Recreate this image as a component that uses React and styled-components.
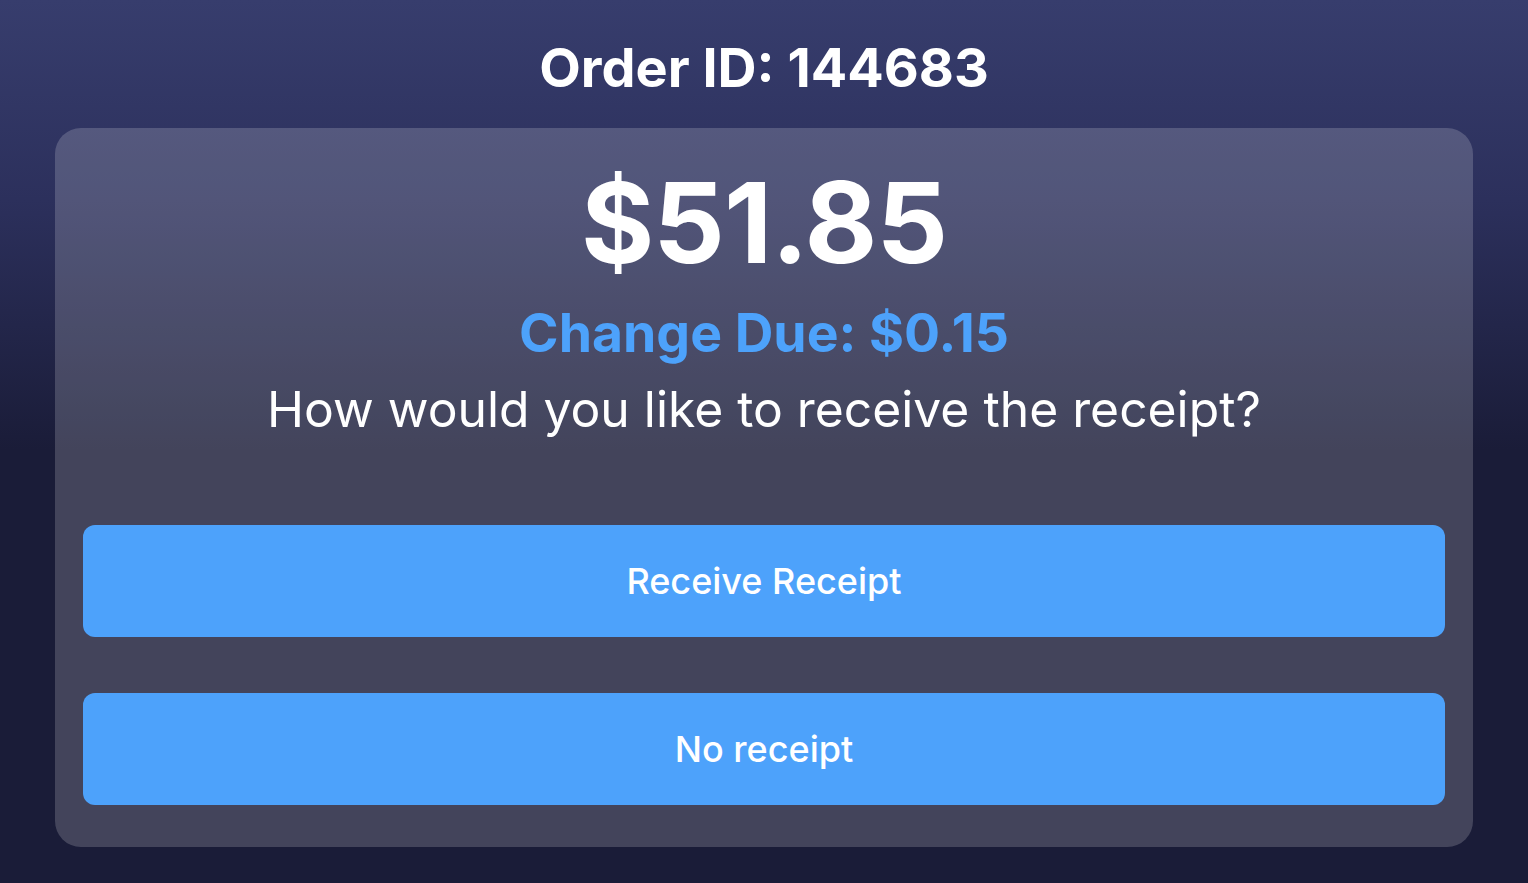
import React from "react";
import styled, { createGlobalStyle } from "styled-components";

const Global = createGlobalStyle`
  html, body { margin: 0; padding: 0; }
  body {
    font-family: Inter, "Noto Sans", "Liberation Sans", sans-serif;
    background: #1a1c38;
  }
  * { box-sizing: border-box; }
`;

const Screen = styled.div`
  width: 100%;
  min-height: 883px;
  background: linear-gradient(to bottom, #373d6d 0px, #2c305c 200px, #1a1c38 450px, #1a1c38 100%);
  display: flex;
  flex-direction: column;
  align-items: stretch;
  padding: 0 55px 36px;
  color: #fff;
`;

const Title = styled.h1`
  margin: 0;
  height: 128px;
  display: flex;
  align-items: center;
  justify-content: center;
  padding-top: 6px;
  font-size: 54px;
  font-weight: 700;
`;

const Card = styled.section`
  background: rgba(255, 255, 255, 0.18);
  border-radius: 26px;
  padding: 28px 28px 42px;
  display: flex;
  flex-direction: column;
`;

const Summary = styled.div`
  display: flex;
  flex-direction: column;
  align-items: center;
  height: 369px;
`;

const Amount = styled.div`
  font-size: 112px;
  font-weight: 700;
  line-height: 132px;
  letter-spacing: -1px;
`;

const Change = styled.div`
  font-size: 53.5px;
  font-weight: 700;
  line-height: 74px;
  color: #4da2fb;
  margin-top: 8px;
`;

const Question = styled.div`
  font-size: 49.8px;
  font-weight: 400;
  line-height: 78px;
`;

const Actions = styled.div`
  display: flex;
  flex-direction: column;
  gap: 56px;
`;

const ActionButton = styled.button`
  height: 112px;
  border: none;
  border-radius: 12px;
  background: #4da2fb;
  color: #fff;
  font-family: inherit;
  font-size: 36px;
  font-weight: 500;
  cursor: pointer;
`;

export default function App() {
  return (
    <>
      <Global />
      <Screen>
        <Title>Order ID: 144683</Title>
        <Card>
          <Summary>
            <Amount>$51.85</Amount>
            <Change>Change Due: $0.15</Change>
            <Question>How would you like to receive the receipt?</Question>
          </Summary>
          <Actions>
            <ActionButton>Receive Receipt</ActionButton>
            <ActionButton>No receipt</ActionButton>
          </Actions>
        </Card>
      </Screen>
    </>
  );
}
